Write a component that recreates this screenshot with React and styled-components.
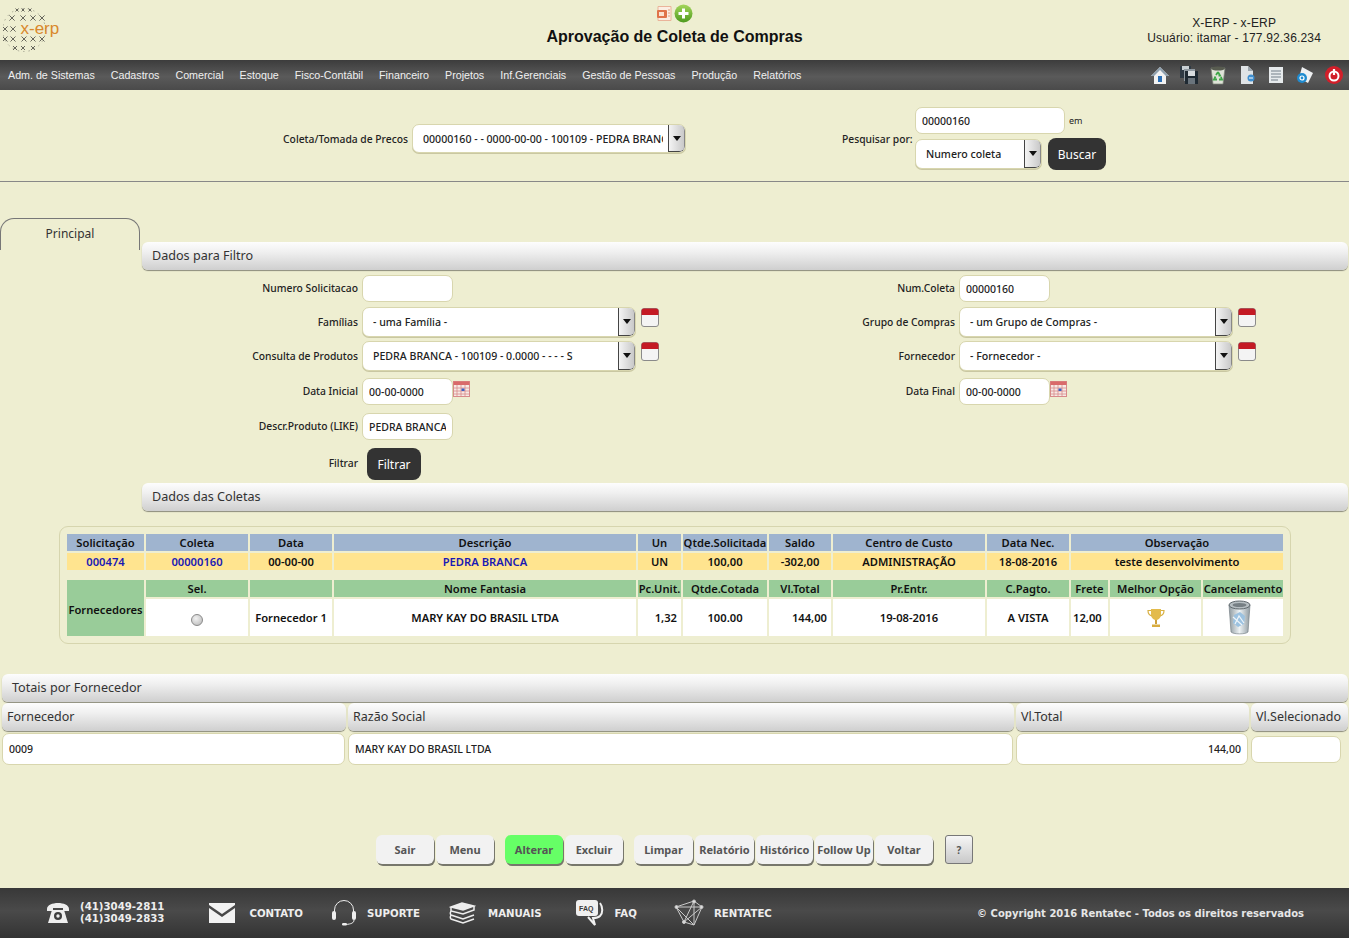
import React from "react";
import styled, { createGlobalStyle } from "styled-components";

const UI_FONT = `"Noto Sans", "Open Sans", sans-serif`;
const ARIAL = `"Liberation Sans", Arial, sans-serif`;

const GlobalStyle = createGlobalStyle`
    html, body {
        margin: 0;
        padding: 0;
        background: #eeeed1;
    }
    body {
        font-family: ${UI_FONT};
        font-size: 11px;
        color: #222;
    }
    * {
        box-sizing: border-box;
    }
`;

const Page = styled.div`
    display: flex;
    flex-direction: column;
    min-height: 938px;
    height: 100vh;
    overflow: hidden;
`;

const Header = styled.header`
    display: grid;
    grid-template-columns: 1fr auto 1fr;
    height: 60px;
`;

const LogoBox = styled.div`
    padding: 7px 0 0 3px;
`;

const TitleBox = styled.div`
    display: flex;
    flex-direction: column;
    align-items: center;
    padding-top: 3px;
`;

const TitleIcons = styled.div`
    display: flex;
    align-items: center;
    gap: 1px;
    height: 20px;
`;

const Title = styled.h1`
    margin: 5px 0 0 0;
    font: bold 16px ${ARIAL};
    line-height: 18px;
    color: #111;
`;

const UserBox = styled.div`
    justify-self: end;
    padding: 16px 28px 0 0;
    font: 12px ${ARIAL};
    letter-spacing: 0.16px;
    line-height: 15px;
    text-align: center;
    color: #222;
`;

const MenuBar = styled.nav`
    display: flex;
    align-items: center;
    justify-content: space-between;
    height: 30px;
    padding: 0 5px 0 8px;
    background: linear-gradient(#3c3c3c, #5a5a5a 55%, #4a4a4a);
`;

const MenuList = styled.div`
    display: flex;
    gap: 16px;
`;

const MenuItem = styled.span`
    font: 10.7px ${ARIAL};
    color: #f0f0f0;
`;

const ToolIcons = styled.div`
    display: flex;
    align-items: center;
    gap: 9px;
`;

const SearchBar = styled.section`
    display: flex;
    align-items: center;
    height: 92px;
    padding-top: 6px;
    border-bottom: 1px solid #888;
`;

const SearchLeft = styled.div`
    display: flex;
    align-items: center;
    justify-content: flex-end;
    gap: 4px;
    width: 686px;
`;

const SearchRight = styled.div`
    display: flex;
    align-items: center;
    gap: 4px;
    margin-left: 156px;
`;

const SearchStack = styled.div`
    display: flex;
    flex-direction: column;
    gap: 4px;
`;

const InlineRow = styled.div`
    display: flex;
    align-items: center;
    gap: 6px;
`;

const Label = styled.label`
    font-weight: 500;
    font-size: 10.3px;
    color: #222;
    white-space: nowrap;
`;

const SearchLabel = styled(Label)`
    flex: none;
    width: 69px;
    text-align: right;
`;

const SmallText = styled.span`
    font-size: 9px;
    margin-left: -2px;
`;

const TextInput = styled.input`
    width: ${({ $width }) => $width || 91}px;
    height: 27px;
    padding: 0 6px;
    border: 1px solid #d8d6ae;
    border-radius: 7px;
    background: #fff;
    font: 500 10.5px ${UI_FONT};
    color: #222;
    outline: none;
`;

const SelectBox = styled.div`
    display: flex;
    width: ${({ $width }) => $width}px;
    height: ${({ $height }) => $height || 29}px;
    background: #fff;
    border: 1px solid #d8d6ae;
    border-radius: 7px;
    overflow: hidden;
    box-shadow: 0 1px 0 #c9c7a2;
`;

const SelectText = styled.span`
    flex: 1;
    min-width: 0;
    margin: 0 5px 0 10px;
    font-weight: 500;
    font-size: 10.6px;
    line-height: 28px;
    white-space: nowrap;
    overflow: hidden;
`;

const SelectArrow = styled.span`
    display: flex;
    align-items: center;
    justify-content: center;
    flex: none;
    width: 17px;
    background: linear-gradient(90deg, #f4f4f4, #c9c9c9);
    border-left: 1px solid #444;
    border-right: 1px solid #888;
    border-bottom: 1px solid #444;
    border-radius: 0 5px 5px 0;
    &::after {
        content: "";
        border-left: 4px solid transparent;
        border-right: 4px solid transparent;
        border-top: 5px solid #111;
    }
`;

const DarkButton = styled.button`
    width: ${({ $width }) => $width}px;
    height: 32px;
    margin-left: ${({ $offset }) => $offset || 0}px;
    border: 0;
    border-radius: 8px;
    background: #333;
    color: #fff;
    font: 12px ${UI_FONT};
    padding: 0;
`;

const Workspace = styled.div`
    display: grid;
    grid-template-columns: 142px 1fr;
`;

const Tab = styled.div`
    width: 140px;
    height: 32px;
    margin-top: 36px;
    padding-top: 6px;
    border: 1px solid #777;
    border-bottom: 0;
    border-radius: 14px 14px 0 0;
    text-align: center;
    font-size: 12px;
    line-height: 17px;
    color: #333;
`;

const TabBody = styled.div`
    padding-top: 60px;
    padding-right: 1px;
`;

const SectionBar = styled.div`
    height: 28px;
    padding-left: 10px;
    border-radius: 6px;
    background: linear-gradient(#fdfdfd, #f0f0f0 35%, #cfcfcf);
    box-shadow: 0 1px 1px #8b8b7c;
    font-size: 12.6px;
    line-height: 27px;
    color: #333;
`;

const FilterForm = styled.div`
    display: grid;
    grid-template-columns: 597px 597px;
    grid-template-rows: 32px 35px 34px 34px 35px 40px;
    align-items: end;
    margin-bottom: 3px;
`;

const Field = styled.div`
    display: flex;
    align-items: ${({ $top }) => ($top ? "flex-start" : "center")};
    & > label {
        padding-bottom: ${({ $top }) => ($top ? 0 : 2)}px;
    }
`;

const FieldLabel = styled(Label)`
    flex: none;
    width: 216px;
    margin-right: 4px;
    text-align: right;
    align-self: center;
`;

const CalendarSlot = styled.span`
    display: flex;
    margin: 1px 0 0 5px;
`;

const DateSlot = styled.span`
    display: flex;
    align-self: flex-start;
    margin: 3px 0 0 0;
`;

const CardWrap = styled.div`
    width: 1232px;
    margin: 15px 0 0 59px;
    padding: 7px;
    height: 118px;
    border: 1px solid #d6d5ae;
    border-radius: 9px;
`;

const QuoteGrid = styled.div`
    display: grid;
    grid-template-columns: 77px 102px 82px 302px 43px 84px 62px 152px 82px 37px 91px 80px;
    grid-template-rows: 17px 17px 6px 17px 37px;
    gap: 2px;
`;

const CELL_COLORS = {
    blue: "#9fb4cf",
    yellow: "#ffe48f",
    green: "#99cc99",
    white: "#ffffff",
};

const Cell = styled.div`
    grid-column: ${({ $span }) => ($span ? `span ${$span}` : "auto")};
    grid-row: ${({ $rows }) => ($rows ? `span ${$rows}` : "auto")};
    display: flex;
    align-items: center;
    justify-content: ${({ $align }) => $align || "center"};
    padding: ${({ $pad }) => $pad || "0"};
    background: ${({ $color }) => CELL_COLORS[$color]};
    color: ${({ $link }) => ($link ? "#1a1ab4" : "#111")};
    font-weight: 600;
    font-size: 11.2px;
    white-space: nowrap;
    overflow: hidden;
`;

const RowSpacer = styled.div`
    grid-column: 1 / -1;
`;

const Radio = styled.span`
    display: block;
    width: 12px;
    height: 12px;
    margin-top: 5px;
    border-radius: 50%;
    border: 1px solid #8a8a8a;
    background: radial-gradient(circle at 40% 35%, #f2f2f2, #b5b5b5);
`;

const TotalsBlock = styled.div`
    margin-top: 30px;
    padding: 0 1px 0 2px;
`;

const TotalsBar = styled(SectionBar)`
    margin-bottom: 1px;
`;

const TotalsGrid = styled.div`
    display: grid;
    grid-template-columns: 344px 666px 233px 97px;
    grid-template-rows: 28px 32px;
    column-gap: 2px;
    row-gap: 2px;
    align-items: center;
`;

const TotalsHead = styled.div`
    height: 28px;
    padding-left: 5px;
    border-radius: 6px;
    background: linear-gradient(#fdfdfd, #f0f0f0 35%, #cfcfcf);
    box-shadow: 0 1px 1px #8b8b7c;
    font-size: 12.5px;
    line-height: 27px;
    color: #333;
`;

const TotalsCell = styled.div`
    height: 32px;
    margin-right: 1px;
    padding: 0 6px;
    border: 1px solid #d8d6ae;
    border-radius: 7px;
    background: #fff;
    font-weight: 500;
    font-size: 10.5px;
    line-height: 30px;
    text-align: ${({ $right }) => ($right ? "right" : "left")};
`;

const EmptyInput = styled(TextInput)`
    width: 90px;
`;

const ActionBar = styled.div`
    display: flex;
    gap: 11px;
    margin-top: 70px;
    padding-left: 376px;
`;

const ActionGroup = styled.div`
    display: flex;
    gap: 2px;
`;

const ActionButton = styled.button`
    width: ${({ $width }) => $width || 58}px;
    height: 29px;
    padding: 0;
    border: 0;
    border-radius: 6px;
    background: ${({ $active }) => ($active ? "#66ff66" : "#f2f2f2")};
    box-shadow: 1px 2px 0 #77776c;
    font: bold 11px ${UI_FONT};
    color: #555;
    white-space: nowrap;
`;

const HelpButton = styled.button`
    width: 28px;
    height: 29px;
    margin-left: 1px;
    padding: 0;
    border: 1px solid #777;
    border-radius: 3px;
    background: linear-gradient(#f6f6f6, #c9c9c9);
    font: bold 10px ${UI_FONT};
    color: #555;
`;

const Footer = styled.footer`
    display: flex;
    align-items: center;
    gap: 28px;
    height: 50px;
    margin-top: auto;
    padding: 0 45px 0 46px;
    background: linear-gradient(#383838, #4a4a4a 45%, #333);
    font: bold 10.2px "DejaVu Sans", Verdana, sans-serif;
    color: #eee;
`;

const FooterItem = styled.div`
    display: flex;
    align-items: center;
    gap: ${({ $gap }) => $gap || 10}px;
    margin-right: ${({ $after }) => $after || 0}px;
`;

const Phones = styled.div`
    line-height: 12px;
`;

const Copyright = styled.div`
    margin-left: auto;
    font-size: 10px;
    color: #e6e6e6;
`;

const TrashSlot = styled.span`
    display: flex;
    padding-right: 6px;
`;

// desenhos

const LogoIcon = () => {
    const rows = [
        { y: 3, xs: [14, 20, 27], s: 1.5 },
        { y: 11, xs: [9, 20, 30, 39], s: 2.6 },
        { y: 22, xs: [2, 10], s: 2.6 },
        { y: 32, xs: [2, 10, 21, 30, 39], s: 2.5 },
        { y: 41, xs: [12, 20, 30], s: 2 },
    ];
    const marks = [];
    rows.forEach((row) => {
        row.xs.forEach((x) => {
            marks.push(`M${x - row.s} ${row.y - row.s}L${x + row.s} ${row.y + row.s}M${x + row.s} ${row.y - row.s}L${x - row.s} ${row.y + row.s}`);
        });
    });
    return (
        <svg width="60" height="48" viewBox="0 0 60 48">
            <circle cx="21" cy="23" r="21.5" fill="none" stroke="#8d8d7c" strokeWidth="0.7" strokeDasharray="1.5 4" />
            <path d={marks.join("")} stroke="#66665c" strokeWidth="1" fill="none" />
            <text x="17.5" y="27" fontFamily={ARIAL} fontSize="17" fill="#d9882c">x-erp</text>
        </svg>
    );
};

const PptIcon = () => (
    <svg width="17" height="17" viewBox="0 0 17 17">
        <path d="M2 1.5h13v14H2z" fill="#fbeee2" stroke="#eab49a" />
        <rect x="1" y="5" width="10" height="8" rx="1" fill="#e0744a" />
        <rect x="3" y="7" width="5" height="4" fill="#fbe3d0" />
        <path d="M12 5h2M12 8h2M12 11h2" stroke="#e0a080" />
    </svg>
);

const PlusIcon = () => (
    <svg width="19" height="19" viewBox="0 0 19 19">
        <defs>
            <linearGradient id="plusGreen" x1="0" y1="0" x2="0" y2="1">
                <stop offset="0" stopColor="#a4d65a" />
                <stop offset="1" stopColor="#4e9a1e" />
            </linearGradient>
        </defs>
        <circle cx="9.5" cy="9.5" r="9" fill="url(#plusGreen)" />
        <path d="M9.5 4.5v10M4.5 9.5h10" stroke="#fff" strokeWidth="3" />
    </svg>
);

const HomeIcon = () => (
    <svg width="20" height="20" viewBox="0 0 20 20">
        <path d="M10 2L1 11h3v8h12v-8h3z" fill="#f2f2f2" />
        <path d="M10 2L1 11h3l6-6 6 6h3z" fill="#8fa0ae" />
        <rect x="8" y="11" width="4" height="6" fill="#2b6fb5" />
    </svg>
);

const SaveIcon = () => (
    <svg width="20" height="20" viewBox="0 0 20 20">
        <path d="M1 1h11v12H1z" fill="#2f3a44" />
        <rect x="3" y="1" width="7" height="4" fill="#c9d0d4" />
        <path d="M5 4h11v12H5z" fill="#8f99a1" />
        <path d="M6 6h13v13H6z" fill="#1f2a33" />
        <rect x="9" y="6" width="7" height="5" fill="#d8dde0" />
        <rect x="9" y="13" width="7" height="6" fill="#6a747c" />
    </svg>
);

const BinIcon = () => (
    <svg width="20" height="20" viewBox="0 0 20 20">
        <path d="M3 3h14l-2 16H5z" fill="#dfe3d8" stroke="#7d8478" strokeWidth="0.7" />
        <ellipse cx="10" cy="3.5" rx="7" ry="2" fill="#585c50" />
        <path d="M10 7l2 3.5h-1.500M13 12l1 2.500h-3M9 14.500H6l1.500-3M8 10l2-3" fill="none" stroke="#3ea648" strokeWidth="1.800" />
    </svg>
);

const DocArrowIcon = () => (
    <svg width="20" height="20" viewBox="0 0 20 20">
        <path d="M4 1h7l5 5v13H4z" fill="#dfe3e6" />
        <path d="M11 1v5h5z" fill="#9aa4ac" />
        <circle cx="14" cy="13" r="3.5" fill="#3f8fd0" />
        <path d="M12 13h4" stroke="#fff" />
    </svg>
);

const DocLinesIcon = () => (
    <svg width="20" height="20" viewBox="0 0 20 20">
        <path d="M3 2h14v16H3z" fill="#e6eaec" />
        <path d="M5 6h10M5 9h10M5 12h10M5 15h7" stroke="#9aa4aa" strokeWidth="1.4" />
    </svg>
);

const DocSearchIcon = () => (
    <svg width="20" height="20" viewBox="0 0 20 20">
        <path d="M7 2l11 6-5 10-9-5z" fill="#eef0f2" />
        <circle cx="7" cy="13" r="5" fill="#1f8bd0" />
        <circle cx="7" cy="13" r="2" fill="none" stroke="#fff" strokeWidth="1.2" />
    </svg>
);

const PowerIcon = () => (
    <svg width="20" height="20" viewBox="0 0 20 20">
        <circle cx="10" cy="10" r="9" fill="#d21f2a" />
        <circle cx="10" cy="11" r="4.5" fill="none" stroke="#fff" strokeWidth="2" />
        <path d="M10 4v6" stroke="#fff" strokeWidth="2.2" />
    </svg>
);

const RedCalendar = () => (
    <svg width="18" height="19" viewBox="0 0 18 19">
        <rect x="0.5" y="0.5" width="17" height="18" rx="2.5" fill="#f4f4f4" stroke="#8a8a8a" />
        <path d="M0.5 7V3a2.5 2.5 0 0 1 2.5-2.5h12A2.5 2.5 0 0 1 17.5 3v4z" fill="#c41a24" />
    </svg>
);

const DateIcon = () => (
    <svg width="17" height="16" viewBox="0 0 17 16">
        <rect x="0.5" y="0.5" width="16" height="15" fill="#f7e9e4" stroke="#d88a8a" />
        <rect x="0.5" y="0.5" width="16" height="3.5" fill="#d96a6a" />
        <path d="M4 4v11M8 4v11M12 4v11M1 7h15M1 10h15M1 13h15" stroke="#d88a8a" strokeWidth="0.8" />
        <rect x="8.5" y="7.5" width="3" height="2.5" fill="#3d5fc0" />
    </svg>
);

const TrophyIcon = () => (
    <svg width="18" height="20" viewBox="0 0 18 20">
        <path d="M4 1h10v5c0 3.5-2.2 6-5 6S4 9.5 4 6z" fill="#e3bb4c" />
        <path d="M4 2.5H1c0 3.5 1.5 5 4 5.5M14 2.5h3c0 3.5-1.5 5-4 5.5" fill="none" stroke="#d9b144" strokeWidth="1.2" />
        <path d="M8 12h2v4H8z" fill="#cda03a" />
        <path d="M5 16.5h8V19H5z" fill="#d9ad40" />
    </svg>
);

const TrashIcon = () => (
    <svg width="26" height="36" viewBox="0 0 26 36">
        <defs>
            <linearGradient id="glass" x1="0" y1="0" x2="1" y2="0">
                <stop offset="0" stopColor="#8f9aa0" />
                <stop offset="0.5" stopColor="#eef3f5" />
                <stop offset="1" stopColor="#8f9aa0" />
            </linearGradient>
        </defs>
        <path d="M2 5h21l-2 27c-2 2.5-15 2.5-17 0z" fill="url(#glass)" stroke="#6d777c" strokeWidth="0.6" />
        <ellipse cx="12.5" cy="5" rx="10.5" ry="4" fill="#b6bec2" stroke="#5f686d" />
        <ellipse cx="12.5" cy="5" rx="7" ry="2" fill="#767f84" />
        <path d="M7 15l6-3 5 4-1 8-6 3-5-4z" fill="#9cc2e0" />
        <path d="M8 24l4-8 5 7M6 17l9 8" fill="none" stroke="#eef5fa" strokeWidth="1.2" />
    </svg>
);

const PhoneIcon = () => (
    <svg width="24" height="24" viewBox="0 0 24 24">
        <path d="M1 8c0-8 22-8 22 0v2h-6V7H7v3H1z" fill="#eee" />
        <path d="M6 9h12l4 13H2z" fill="#eee" />
        <circle cx="12" cy="15" r="4" fill="#3e3e3e" />
        <circle cx="12" cy="15" r="1.7" fill="#eee" />
    </svg>
);

const MailIcon = () => (
    <svg width="26" height="20" viewBox="0 0 26 20">
        <path d="M0 0h26v2L13 11 0 2z" fill="#f2f2f2" />
        <path d="M0 5l13 9 13-9v15H0z" fill="#f2f2f2" />
    </svg>
);

const HeadsetIcon = () => (
    <svg width="26" height="28" viewBox="0 0 26 28">
        <path d="M3.5 14V11a9.5 9.5 0 0 1 19 0v3" fill="none" stroke="#eee" strokeWidth="1" />
        <rect x="1" y="12" width="4" height="9" rx="2" fill="#eee" />
        <rect x="21" y="12" width="4" height="9" rx="2" fill="#eee" />
        <path d="M23 21c0 3-3 4-8 4.5" fill="none" stroke="#eee" />
        <rect x="11" y="24" width="5" height="2.5" rx="1.2" fill="#eee" />
    </svg>
);

const BooksIcon = () => (
    <svg width="27" height="24" viewBox="0 0 27 24" fill="none" stroke="#eee" strokeWidth="1.5">
        <path d="M2 6l11-4 12 3-11 4z" fill="#eee" />
        <path d="M2 6v4l12 3 11-4V5" />
        <path d="M2 10c-1 2-1 3 0 4l12 4 11-4" />
        <path d="M2 14c-1 2-1 3 0 4l12 4 11-4" />
    </svg>
);

const RentatecIcon = () => (
    <svg width="30" height="28" viewBox="0 0 30 28" fill="none" stroke="#c9c9c9" strokeWidth="1">
        <path d="M2 8L20 2l8 6-8 18-10-3zM2 8l18 18M20 2L10 23M2 8l26 0M20 2v24M10 23L28 8" />
        <circle cx="20" cy="2.5" r="1.5" fill="#ddd" />
        <circle cx="2.5" cy="8" r="1.5" fill="#ddd" />
        <circle cx="27.5" cy="8" r="1.5" fill="#ddd" />
        <circle cx="10" cy="23" r="1.5" fill="#ddd" />
    </svg>
);

const FaqBubbleText = styled.text`
    font: bold 7px ${ARIAL};
`;

const FaqIcon = () => (
    <svg width="28" height="26" viewBox="0 0 28 26">
        <path d="M3 0h16a3 3 0 0 1 3 3v10a3 3 0 0 1-3 3h-5l-1 0H3a3 3 0 0 1-3-3V3a3 3 0 0 1 3-3z" fill="#f0f0f0" />
        <path d="M24 3c3 4 3 10 0 13-2 2-5 2-7 2l2 7-7-8" fill="none" stroke="#f0f0f0" strokeWidth="2" />
        <FaqBubbleText x="3" y="10.5" fill="#3a3a3a">FAQ</FaqBubbleText>
    </svg>
);

const MENU = ["Adm. de Sistemas", "Cadastros", "Comercial", "Estoque", "Fisco-Contábil", "Financeiro", "Projetos", "Inf.Gerenciais", "Gestão de Pessoas", "Produção", "Relatórios"];

export default function App() {
    return (
        <Page>
            <GlobalStyle />
            <Header>
                <LogoBox><LogoIcon /></LogoBox>
                <TitleBox>
                    <TitleIcons><PptIcon /><PlusIcon /></TitleIcons>
                    <Title>Aprovação de Coleta de Compras</Title>
                </TitleBox>
                <UserBox>
                    X-ERP - x-ERP<br />
                    Usuário: itamar - 177.92.36.234
                </UserBox>
            </Header>

            <MenuBar>
                <MenuList>
                    {MENU.map((item) => <MenuItem key={item}>{item}</MenuItem>)}
                </MenuList>
                <ToolIcons>
                    <HomeIcon /><SaveIcon /><BinIcon /><DocArrowIcon /><DocLinesIcon /><DocSearchIcon /><PowerIcon />
                </ToolIcons>
            </MenuBar>

            <SearchBar>
                <SearchLeft>
                    <Label>Coleta/Tomada de Precos</Label>
                    <SelectBox $width={274}>
                        <SelectText>00000160 - - 0000-00-00 - 100109 - PEDRA BRANCA</SelectText>
                        <SelectArrow />
                    </SelectBox>
                </SearchLeft>
                <SearchRight>
                    <SearchLabel>Pesquisar por:</SearchLabel>
                    <SearchStack>
                        <InlineRow>
                            <TextInput $width={150} value="00000160" readOnly />
                            <SmallText>em</SmallText>
                        </InlineRow>
                        <InlineRow>
                            <SelectBox $width={127} $height={30}>
                                <SelectText>Numero coleta</SelectText>
                                <SelectArrow />
                            </SelectBox>
                            <DarkButton $width={58}>Buscar</DarkButton>
                        </InlineRow>
                    </SearchStack>
                </SearchRight>
            </SearchBar>

            <Workspace>
                <Tab>Principal</Tab>
                <TabBody>
                    <SectionBar>Dados para Filtro</SectionBar>
                    <FilterForm>
                        <Field>
                            <FieldLabel>Numero Solicitacao</FieldLabel>
                            <TextInput value="" readOnly />
                        </Field>
                        <Field>
                            <FieldLabel>Num.Coleta</FieldLabel>
                            <TextInput value="00000160" readOnly />
                        </Field>
                        <Field $top>
                            <FieldLabel>Famílias</FieldLabel>
                            <SelectBox $width={274} $height={30}>
                                <SelectText>- uma Família -</SelectText>
                                <SelectArrow />
                            </SelectBox>
                            <CalendarSlot><RedCalendar /></CalendarSlot>
                        </Field>
                        <Field $top>
                            <FieldLabel>Grupo de Compras</FieldLabel>
                            <SelectBox $width={274} $height={30}>
                                <SelectText>- um Grupo de Compras -</SelectText>
                                <SelectArrow />
                            </SelectBox>
                            <CalendarSlot><RedCalendar /></CalendarSlot>
                        </Field>
                        <Field $top>
                            <FieldLabel>Consulta de Produtos</FieldLabel>
                            <SelectBox $width={274} $height={30}>
                                <SelectText>PEDRA BRANCA - 100109 - 0.0000 - - - - S</SelectText>
                                <SelectArrow />
                            </SelectBox>
                            <CalendarSlot><RedCalendar /></CalendarSlot>
                        </Field>
                        <Field $top>
                            <FieldLabel>Fornecedor</FieldLabel>
                            <SelectBox $width={274} $height={30}>
                                <SelectText>- Fornecedor -</SelectText>
                                <SelectArrow />
                            </SelectBox>
                            <CalendarSlot><RedCalendar /></CalendarSlot>
                        </Field>
                        <Field>
                            <FieldLabel>Data Inicial</FieldLabel>
                            <TextInput value="00-00-0000" readOnly />
                            <DateSlot><DateIcon /></DateSlot>
                        </Field>
                        <Field>
                            <FieldLabel>Data Final</FieldLabel>
                            <TextInput value="00-00-0000" readOnly />
                            <DateSlot><DateIcon /></DateSlot>
                        </Field>
                        <Field>
                            <FieldLabel>Descr.Produto (LIKE)</FieldLabel>
                            <TextInput value="PEDRA BRANCA" readOnly />
                        </Field>
                        <div />
                        <Field>
                            <FieldLabel>Filtrar</FieldLabel>
                            <DarkButton $width={54} $offset={5}>Filtrar</DarkButton>
                        </Field>
                    </FilterForm>
                    <SectionBar>Dados das Coletas</SectionBar>
                </TabBody>
            </Workspace>

            <CardWrap>
                <QuoteGrid>
                    <Cell $color="blue">Solicitação</Cell>
                    <Cell $color="blue">Coleta</Cell>
                    <Cell $color="blue">Data</Cell>
                    <Cell $color="blue">Descrição</Cell>
                    <Cell $color="blue">Un</Cell>
                    <Cell $color="blue">Qtde.Solicitada</Cell>
                    <Cell $color="blue">Saldo</Cell>
                    <Cell $color="blue">Centro de Custo</Cell>
                    <Cell $color="blue">Data Nec.</Cell>
                    <Cell $color="blue" $span={3}>Observação</Cell>

                    <Cell $color="yellow" $link>000474</Cell>
                    <Cell $color="yellow" $link>00000160</Cell>
                    <Cell $color="yellow">00-00-00</Cell>
                    <Cell $color="yellow" $link>PEDRA BRANCA</Cell>
                    <Cell $color="yellow">UN</Cell>
                    <Cell $color="yellow">100,00</Cell>
                    <Cell $color="yellow">-302,00</Cell>
                    <Cell $color="yellow">ADMINISTRAÇÃO</Cell>
                    <Cell $color="yellow">18-08-2016</Cell>
                    <Cell $color="yellow" $span={3}>teste desenvolvimento</Cell>

                    <RowSpacer />

                    <Cell $color="green" $rows={2} $pad="2px 0 0 0">Fornecedores</Cell>
                    <Cell $color="green">Sel.</Cell>
                    <Cell $color="green" />
                    <Cell $color="green">Nome Fantasia</Cell>
                    <Cell $color="green">Pc.Unit.</Cell>
                    <Cell $color="green">Qtde.Cotada</Cell>
                    <Cell $color="green">Vl.Total</Cell>
                    <Cell $color="green">Pr.Entr.</Cell>
                    <Cell $color="green">C.Pagto.</Cell>
                    <Cell $color="green">Frete</Cell>
                    <Cell $color="green">Melhor Opção</Cell>
                    <Cell $color="green">Cancelamento</Cell>

                    <Cell $color="white"><Radio /></Cell>
                    <Cell $color="white">Fornecedor 1</Cell>
                    <Cell $color="white">MARY KAY DO BRASIL LTDA</Cell>
                    <Cell $color="white" $align="flex-end" $pad="0 4px 0 0">1,32</Cell>
                    <Cell $color="white">100.00</Cell>
                    <Cell $color="white" $align="flex-end" $pad="0 4px 0 0">144,00</Cell>
                    <Cell $color="white">19-08-2016</Cell>
                    <Cell $color="white">A VISTA</Cell>
                    <Cell $color="white" $align="flex-start" $pad="0 0 0 2px">12,00</Cell>
                    <Cell $color="white"><TrophyIcon /></Cell>
                    <Cell $color="white"><TrashSlot><TrashIcon /></TrashSlot></Cell>
                </QuoteGrid>
            </CardWrap>

            <TotalsBlock>
                <TotalsBar>Totais por Fornecedor</TotalsBar>
                <TotalsGrid>
                    <TotalsHead>Fornecedor</TotalsHead>
                    <TotalsHead>Razão Social</TotalsHead>
                    <TotalsHead>Vl.Total</TotalsHead>
                    <TotalsHead>Vl.Selecionado</TotalsHead>
                    <TotalsCell>0009</TotalsCell>
                    <TotalsCell>MARY KAY DO BRASIL LTDA</TotalsCell>
                    <TotalsCell $right>144,00</TotalsCell>
                    <EmptyInput value="" readOnly />
                </TotalsGrid>
            </TotalsBlock>

            <ActionBar>
                <ActionGroup>
                    <ActionButton>Sair</ActionButton>
                    <ActionButton>Menu</ActionButton>
                </ActionGroup>
                <ActionGroup>
                    <ActionButton $active>Alterar</ActionButton>
                    <ActionButton>Excluir</ActionButton>
                </ActionGroup>
                <ActionGroup>
                    <ActionButton $width={59}>Limpar</ActionButton>
                    <ActionButton $width={59}>Relatório</ActionButton>
                    <ActionButton $width={57}>Histórico</ActionButton>
                    <ActionButton>Follow Up</ActionButton>
                    <ActionButton>Voltar</ActionButton>
                </ActionGroup>
                <HelpButton>?</HelpButton>
            </ActionBar>

            <Footer>
                <FooterItem $after={17}>
                    <PhoneIcon />
                    <Phones>(41)3049-2811<br />(41)3049-2833</Phones>
                </FooterItem>
                <FooterItem $gap={14}><MailIcon />CONTATO</FooterItem>
                <FooterItem $after={1}><HeadsetIcon />SUPORTE</FooterItem>
                <FooterItem $gap={12} $after={6}><BooksIcon />MANUAIS</FooterItem>
                <FooterItem $after={9} $gap={11}><FaqIcon />FAQ</FooterItem>
                <FooterItem><RentatecIcon />RENTATEC</FooterItem>
                <Copyright>© Copyright 2016 Rentatec - Todos os direitos reservados</Copyright>
            </Footer>
        </Page>
    );
}
